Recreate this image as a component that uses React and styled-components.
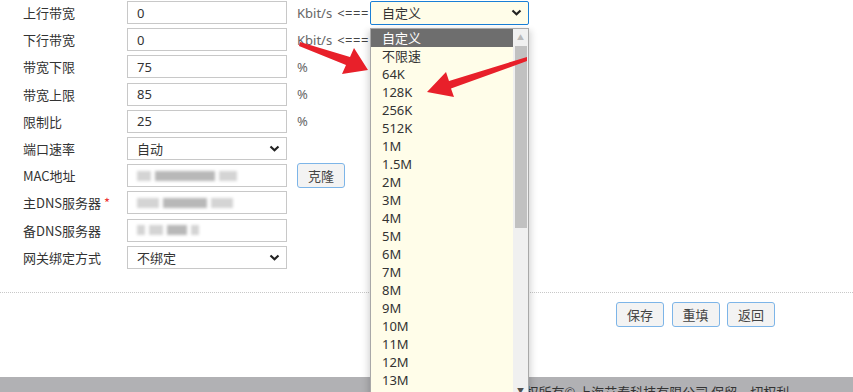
import styled, { createGlobalStyle } from "styled-components";

const GlobalStyle = createGlobalStyle`
  body {
    margin: 0;
    font-family: "Noto Sans", "Noto Sans CJK SC", sans-serif;
    font-size: 13px;
    color: #333;
    background: #fff;
  }
`;

const rows = [
  { label: "上行带宽", value: "0", unit: "Kbit/s", arrow: true, rateSelect: true },
  { label: "下行带宽", value: "0", unit: "Kbit/s", arrow: true },
  { label: "带宽下限", value: "75", unit: "%" },
  { label: "带宽上限", value: "85", unit: "%" },
  { label: "限制比", value: "25", unit: "%" },
  { label: "端口速率", select: "自动" },
  { label: "MAC地址", blur: "mac", clone: true },
  { label: "主DNS服务器", blur: "dns1", required: true },
  { label: "备DNS服务器", blur: "dns2" },
  { label: "网关绑定方式", select: "不绑定" },
];

const options = [
  "自定义", "不限速", "64K", "128K", "256K", "512K", "1M", "1.5M", "2M", "3M",
  "4M", "5M", "6M", "7M", "8M", "9M", "10M", "11M", "12M", "13M",
];

function Chevron() {
  return (
    <svg width="11" height="7" viewBox="0 0 11 7">
      <polyline points="1.5,1.5 5.5,5.2 9.5,1.5" fill="none" stroke="#222" strokeWidth="2.2" />
    </svg>
  );
}

function Blurred({ kind }) {
  if (kind === "mac") {
    return (
      <BlurRow>
        <BlurBlock $w={14} />
        <BlurBlock $w={60} $dark />
        <BlurBlock $w={18} />
      </BlurRow>
    );
  }
  if (kind === "dns1") {
    return (
      <BlurRow>
        <BlurBlock $w={22} />
        <BlurBlock $w={44} $dark />
        <BlurBlock $w={22} />
      </BlurRow>
    );
  }
  return (
    <BlurRow>
      <BlurBlock $w={8} />
      <BlurBlock $w={14} />
      <BlurBlock $w={20} $dark />
      <BlurBlock $w={8} />
    </BlurRow>
  );
}

export default function App() {
  return (
    <Page>
      <GlobalStyle />
      <Form>
        {rows.map((r) => (
          <Row key={r.label}>
            <Label>
              {r.label}
              {r.required && <Star>*</Star>}
            </Label>
            {r.select ? (
              <Select>
                <span>{r.select}</span>
                <Chevron />
              </Select>
            ) : (
              <Input>{r.blur ? <Blurred kind={r.blur} /> : r.value}</Input>
            )}
            <Extra>
              {r.unit && <Unit>{r.unit}</Unit>}
              {r.arrow && <Pointer>&lt;===</Pointer>}
              {r.rateSelect && (
                <RateSelect>
                  <span>自定义</span>
                  <Chevron />
                </RateSelect>
              )}
              {r.clone && <Button>克隆</Button>}
            </Extra>
          </Row>
        ))}
      </Form>
      <Divider />
      <ButtonBar>
        <Button>保存</Button>
        <Button>重填</Button>
        <Button>返回</Button>
      </ButtonBar>
      <Footer>
        <FooterLink>Copyright</FooterLink> 版权所有© 上海艾泰科技有限公司 保留一切权利
      </Footer>

      <Dropdown>
        <OptionList>
          {options.map((o, i) => (
            <Option key={o} $active={i === 0}>
              {o}
            </Option>
          ))}
        </OptionList>
        <Scrollbar>
          <ScrollArrow>▲</ScrollArrow>
          <Thumb />
          <ScrollArrow $down>▼</ScrollArrow>
        </Scrollbar>
      </Dropdown>

      <Arrows width="853" height="392" viewBox="0 0 853 392">
        <polygon
          points="300,42 350,57 354,48 368,70 342,74 346,65 299,46"
          fill="#e8202a"
        />
        <polygon
          points="527,57 449,81 446,72 427,92 454,97 451,88.5 527,61"
          fill="#e8202a"
        />
      </Arrows>
    </Page>
  );
}

const Page = styled.div`
  position: relative;
  width: 853px;
  height: 392px;
  overflow: hidden;
  display: flex;
  flex-direction: column;
`;

const Form = styled.div`
  display: flex;
  flex-direction: column;
  margin-top: -1px;
  padding-left: 23px;
`;

const Row = styled.div`
  display: grid;
  grid-template-columns: 104px 160px 1fr;
  align-items: center;
  height: 27.2px;
`;

const Label = styled.div`
  font-family: "Noto Sans CJK SC", sans-serif;
  font-size: 13px;
  color: #333;
  white-space: nowrap;
`;

const Star = styled.span`
  color: #e33;
  margin-left: 3px;
`;

const Input = styled.div`
  box-sizing: border-box;
  height: 23px;
  border: 1px solid #c8c8c8;
  padding: 0 0 0 9px;
  display: flex;
  align-items: center;
  font-size: 13px;
  color: #333;
  background: #fff;
`;

const Select = styled(Input)`
  justify-content: space-between;
  padding-right: 6px;
  font-family: "Noto Sans CJK SC", sans-serif;
`;

const BlurRow = styled.div`
  display: flex;
  gap: 4px;
  filter: blur(1.5px);
`;

const BlurBlock = styled.span`
  display: block;
  width: ${(p) => p.$w}px;
  height: 10px;
  background: ${(p) => (p.$dark ? "#b8b8b8" : "#d4d4d4")};
`;

const Extra = styled.div`
  display: flex;
  align-items: center;
  padding-left: 10px;
`;

const Unit = styled.span`
  color: #666;
  font-size: 13px;
`;

const Pointer = styled.span`
  color: #444;
  margin-left: 5px;
  letter-spacing: 0.5px;
`;

const RateSelect = styled.div`
  box-sizing: border-box;
  width: 159px;
  height: 24px;
  margin-left: 1px;
  border: 1px solid #1a7fd6;
  border-radius: 2px;
  background: #fffde9;
  display: flex;
  align-items: center;
  justify-content: space-between;
  padding: 0 6px 0 11px;
  font-family: "Noto Sans CJK SC", sans-serif;
`;

const Button = styled.button`
  box-sizing: border-box;
  width: 48px;
  height: 25px;
  border: 1px solid #7db5e8;
  border-radius: 3px;
  background: #f3f3f3;
  font-family: "Noto Sans CJK SC", sans-serif;
  font-size: 13px;
  color: #444;
  padding: 0;
`;

const Divider = styled.div`
  margin-top: 21px;
  border-top: 1px dotted #c8c8c8;
`;

const ButtonBar = styled.div`
  display: flex;
  justify-content: flex-end;
  gap: 7.5px;
  padding: 9px 78px 0 0;
`;

const Footer = styled.div`
  margin-top: auto;
  box-sizing: border-box;
  height: 15px;
  flex-shrink: 0;
  background: #b1b1b4;
  padding: 7px 0 0 450px;
  white-space: nowrap;
  font-family: "Noto Sans CJK SC", sans-serif;
  font-size: 13px;
  color: #333;
  line-height: 16px;
`;

const FooterLink = styled.span`
  color: #1f5fa8;
`;

const Dropdown = styled.div`
  position: absolute;
  left: 370px;
  top: 28px;
  width: 159px;
  height: 372px;
  box-sizing: border-box;
  border: 1px solid #a8a8a8;
  background: #fffde9;
  box-shadow: -3px 2px 6px rgba(0, 0, 0, 0.12), 3px 2px 6px rgba(0, 0, 0, 0.12);
  display: flex;
`;

const OptionList = styled.div`
  flex: 1;
  display: flex;
  flex-direction: column;
`;

const Option = styled.div`
  height: 18px;
  line-height: 18px;
  padding-left: 11px;
  font-size: 13px;
  font-family: "Noto Sans", "Noto Sans CJK SC", sans-serif;
  color: ${(p) => (p.$active ? "#fff" : "#333")};
  background: ${(p) => (p.$active ? "#6e6e6e" : "transparent")};
`;

const Scrollbar = styled.div`
  width: 15px;
  background: #f0f0f0;
  display: flex;
  flex-direction: column;
  align-items: center;
`;

const ScrollArrow = styled.div`
  font-size: 7px;
  color: ${(p) => (p.$down ? "#505050" : "#b8b8b8")};
  height: 17px;
  line-height: 17px;
  margin-top: ${(p) => (p.$down ? "auto" : "0")};
`;

const Thumb = styled.div`
  width: 12px;
  height: 182px;
  background: #c1c1c1;
`;

const Arrows = styled.svg`
  position: absolute;
  left: 0;
  top: 0;
  pointer-events: none;
`;
